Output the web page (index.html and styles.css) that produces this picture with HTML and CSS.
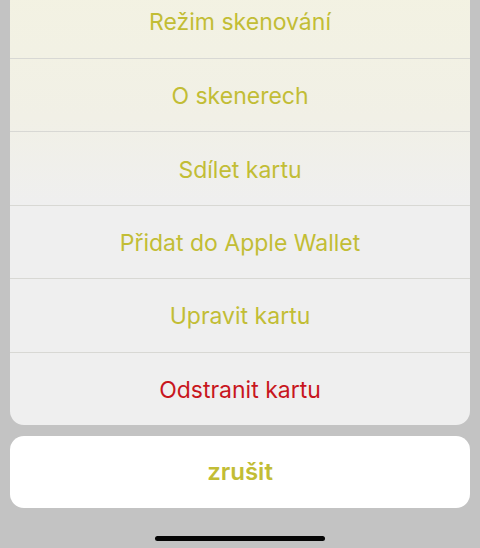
FILE: index.html
```html
<!DOCTYPE html>
<html lang="cs">
<head>
<meta charset="utf-8">
<link rel="stylesheet" href="styles.css">
</head>
<body>
<div class="screen">
  <div class="sheet">
    <div class="row">Režim skenování</div>
    <div class="row">O skenerech</div>
    <div class="row">Sdílet kartu</div>
    <div class="row">Přidat do Apple Wallet</div>
    <div class="row">Upravit kartu</div>
    <div class="row danger">Odstranit kartu</div>
  </div>
  <div class="cancel">zrušit</div>
  <div class="home"></div>
</div>
</body>
</html>
```
FILE: styles.css
```css
html, body {
  margin: 0;
  padding: 0;
  width: 480px;
  height: 548px;
  overflow: hidden;
  background: #c3c3c3;
}
.screen {
  display: flex;
  flex-direction: column;
  align-items: center;
  padding: 0 10px;
  font-family: Inter, "Noto Sans", sans-serif;
}
.sheet {
  width: 460px;
  margin-top: -15.4px;
  border-radius: 14px;
  overflow: hidden;
  background: linear-gradient(180deg, #f3f2e2 0%, #f1f0e6 30%, #efefef 50%, #efefef 100%);
}
.row {
  box-sizing: border-box;
  height: 73.4px;
  display: flex;
  align-items: center;
  justify-content: center;
  padding-top: 2px;
  border-top: 1px solid #d8d8d4;
  color: #c2bd35;
  font-size: 23px;
}
.row:first-child {
  border-top: none;
}
.row.danger {
  color: #c8161d;
}
.cancel {
  width: 460px;
  height: 72px;
  margin-top: 11px;
  border-radius: 14px;
  background: #ffffff;
  display: flex;
  align-items: center;
  justify-content: center;
  color: #c2bd35;
  font-size: 24px;
  font-weight: 600;
}
.home {
  width: 170px;
  height: 5px;
  margin-top: 28px;
  border-radius: 3px;
  background: #050505;
}
```
